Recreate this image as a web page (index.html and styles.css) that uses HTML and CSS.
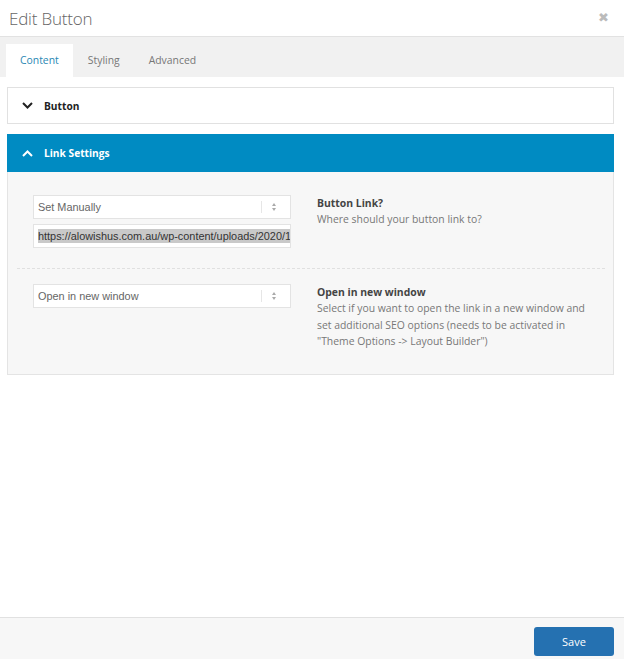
FILE: index.html
```html
<!DOCTYPE html>
<html lang="en">
<head>
  <meta charset="UTF-8">
  <meta name="viewport" content="width=device-width, initial-scale=1.0">
  <title>Edit Button</title>
  <link rel="stylesheet" href="styles.css">
</head>
<body>
  <div class="modal">
    <div class="modal-header">
      <div class="modal-title">Edit Button</div>
      <span class="modal-close">&#10006;</span>
    </div>

    <div class="tabs">
      <div class="tab active">Content</div>
      <div class="tab">Styling</div>
      <div class="tab">Advanced</div>
    </div>

    <div class="modal-body">
      <div class="toggle">
        <div class="toggle-head">
          <svg class="chevron" width="11" height="7" viewBox="0 0 11 7"><polyline points="1,1 5.5,5.5 10,1" fill="none" stroke="currentColor" stroke-width="2"/></svg>
          <span>Button</span>
        </div>
      </div>

      <div class="toggle open">
        <div class="toggle-head">
          <svg class="chevron" width="11" height="7" viewBox="0 0 11 7"><polyline points="1,6 5.5,1.5 10,6" fill="none" stroke="currentColor" stroke-width="2"/></svg>
          <span>Link Settings</span>
        </div>
        <div class="toggle-body">
          <div class="field-row">
            <div class="field-inputs">
              <div class="select">
                <span>Set Manually</span>
                <span class="select-arrows"></span>
              </div>
              <div class="text-input"><span class="selected">https://alowishus.com.au/wp-content/uploads/2020/1</span></div>
            </div>
            <div class="field-info">
              <div class="field-label">Button Link?</div>
              <div class="field-desc">Where should your button link to?</div>
            </div>
          </div>

          <div class="field-row">
            <div class="field-inputs">
              <div class="select">
                <span>Open in new window</span>
                <span class="select-arrows"></span>
              </div>
            </div>
            <div class="field-info">
              <div class="field-label">Open in new window</div>
              <div class="field-desc">Select if you want to open the link in a new window and set additional SEO options (needs to be activated in "Theme Options -&gt; Layout Builder")</div>
            </div>
          </div>
        </div>
      </div>
    </div>

    <div class="modal-footer">
      <button class="btn-save">Save</button>
    </div>
  </div>
</body>
</html>
```

FILE: styles.css
```css
body {
  margin: 0;
  font-family: 'Open Sans', Arial, sans-serif;
  color: #555;
  background-color: #fff;
}

.modal {
  display: flex;
  flex-direction: column;
  height: 659px;
}

.modal-header {
  display: flex;
  align-items: center;
  justify-content: space-between;
  height: 36px;
  padding: 0 15px 0 9px;
  border-bottom: 1px solid #e2e2e2;
}

.modal-title {
  font-size: 17px;
  font-weight: 300;
  color: #666;
  letter-spacing: -0.2px;
}

.modal-close {
  font-size: 12.5px;
  color: #bbb;
  margin-top: -1px;
}

.tabs {
  display: flex;
  align-items: flex-end;
  height: 40px;
  padding-left: 6px;
  background-color: #f1f1f1;
}

.tab {
  height: 33px;
  line-height: 32px;
  padding: 0 14px;
  font-size: 10.4px;
  color: #777;
}

.tab.active {
  background-color: #fff;
  color: #2a88b4;
}

.tab + .tab {
  padding-left: 15px;
}

.modal-body {
  flex: 1;
  padding: 10px 10px 0 7px;
}

.toggle {
  border: 1px solid #e1e1e1;
  margin-bottom: 10px;
}

.toggle-head {
  display: flex;
  align-items: center;
  height: 35px;
  padding-left: 14px;
  font-size: 10.2px;
  font-weight: 700;
  color: #222;
}

.toggle-head .chevron {
  margin-right: 11px;
}

.toggle.open {
  border-color: #e4e4e4;
}

.toggle.open .toggle-head {
  height: 38px;
  margin: -1px -1px 0;
  padding-left: 15px;
  background-color: #008bc2;
  color: #fff;
}

.toggle-body {
  background-color: #f7f7f7;
  padding: 0 8px 0 9px;
}

.field-row {
  display: grid;
  grid-template-columns: 258px 1fr;
  column-gap: 26px;
  padding: 23px 0 20px 16px;
}

.field-row + .field-row {
  border-top: 1px dashed #e0e0e0;
  padding: 15px 0 25px 16px;
}

.field-inputs {
  display: flex;
  flex-direction: column;
  gap: 5px;
}

.select,
.text-input {
  display: flex;
  align-items: center;
  height: 22px;
  padding: 0 4px;
  background-color: #fff;
  border: 1px solid #e3e3e3;
  font-family: 'Liberation Sans', Arial, sans-serif;
  font-size: 10.9px;
  color: #666;
  overflow: hidden;
  white-space: nowrap;
}

.select {
  justify-content: space-between;
}

.select-arrows {
  position: relative;
  width: 24px;
  height: 12px;
  border-left: 1px solid #e6e6e6;
}

.select-arrows::before,
.select-arrows::after {
  content: '';
  position: absolute;
  left: 10px;
  border-left: 2.5px solid transparent;
  border-right: 2.5px solid transparent;
}

.select-arrows::before {
  top: 2px;
  border-bottom: 3px solid #aaa;
}

.select-arrows::after {
  top: 7px;
  border-top: 3px solid #aaa;
}

.text-input {
  color: #333;
}

.text-input .selected {
  background-color: #c9c9c9;
  line-height: 14px;
}

.field-info {
  max-width: 272px;
  font-size: 10.4px;
  line-height: 16.3px;
}

.field-label {
  font-weight: 700;
  color: #444;
}

.field-desc {
  color: #777;
}

.modal-footer {
  display: flex;
  justify-content: flex-end;
  height: 41px;
  padding: 0 10px 0 0;
  align-items: flex-start;
  border-top: 1px solid #e1e1e1;
  background-color: #f7f7f7;
}

.btn-save {
  margin-top: 9px;
  width: 80px;
  height: 29px;
  border: none;
  border-radius: 3px;
  background-color: #2571b1;
  color: #fff;
  font-family: 'Open Sans', Arial, sans-serif;
  font-size: 11px;
}
```
